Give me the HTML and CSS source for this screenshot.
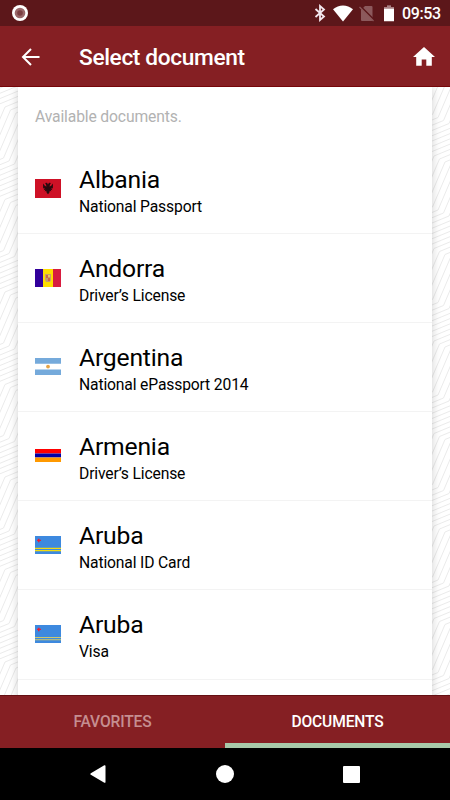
FILE: index.html
```html
<!DOCTYPE html>
<html lang="en">
<head>
<meta charset="utf-8">
<title>Select document</title>
<link rel="stylesheet" href="styles.css">
</head>
<body>
<div class="screen">
  <div class="status">
    <svg width="16" height="16" viewBox="0 0 16 16"><circle cx="8" cy="8" r="8" fill="#fff"/><circle cx="8" cy="8" r="5.3" fill="#9a686b"/><circle cx="8" cy="8" r="2.8" fill="#7b3f43"/></svg>
    <div class="status-icons">
      <svg class="bt" width="12" height="18" viewBox="0 0 12 18" fill="none" stroke="#f3e8ef" stroke-width="1.8"><path d="M1.5 5 10 12.5 6 16V2l4 3.500L1.500 13"/></svg>
      <svg class="wifi" width="20" height="17" viewBox="0 0 20 17"><path d="M0 4.300C5.800-.8 14.200-.8 20 4.300L10 16.500Z" fill="#fff"/></svg>
      <svg class="sim" width="16" height="17" viewBox="0 0 16 17"><path d="M6 1h6.500q1 0 1 1v13q0 1-1 1H3q-1 0-1-1V5Z" fill="#8c595c"/><path d="M1.500 1.500 15 15" stroke="#5c171a" stroke-width="2"/><path d="M.5 2 14.500 16" stroke="#8c595c" stroke-width="1.300"/></svg>
      <svg class="battery" width="10" height="17" viewBox="0 0 10 17"><path d="M0 2h3V.8h4V2h3v14.300H0Z" fill="#fff"/><path d="M0 2h3V.8h4V2h3v1.800H0Z" fill="#a98184"/></svg>
      <span class="clock">09:53</span>
    </div>
  </div>
  <header class="appbar">
    <svg class="back" width="20" height="18" viewBox="0 0 20 18" fill="none" stroke="#fff" stroke-width="2"><path d="M18.500 9H2M10 1 2 9l8 8"/></svg>
    <h1>Select document</h1>
    <svg class="home" width="22" height="19" viewBox="0 0 22 19"><path d="M11 0 0 10h3.200v8.700h5.500v-6.200h4.600v6.200h5.500V10H22Z" fill="#fff"/></svg>
  </header>
  <main class="content">
    <svg class="pattern" id="pattern" width="450" height="608" fill="none" stroke="#ebebeb" stroke-width="1"></svg>
    <section class="card">
      <p class="hint">Available documents.</p>
      <ul class="list">
        <li><svg class="flag" viewBox="0 0 26 19"><path fill="#ce1126" d="M0 0h26v19H0z"/><path fill="#28090e" d="m13 5.500-1-1.800-2 .3.800 1 .7 2.500L10 7 8 4.500l.2 5 1.500-.7-1 2.400 1.700-.8-.7 2 1.500-.7.5 2 1.300 1.600 1.300-1.600.5-2 1.500.7-.7-2 1.700.8-1-2.400 1.500.7.2-5L16 7l-1.500.5.700-2.500.8-1-2-.3Z"/></svg><div><h2>Albania</h2><p>National Passport</p></div></li>
        <li><svg class="flag" viewBox="0 0 26 18"><path fill="#31009b" d="M0 0h8v18H0z"/><path fill="#fede00" d="M8 0h10v18H8z"/><path fill="#d81c3f" d="M18 0h8v18h-8z"/><path fill="#c9a06a" d="M10 5h6v6l-1 2h-4l-1-2z"/><path fill="#d2683f" d="M11 6h2v3h-2zm2 3h2v3h-2z"/><path fill="#e8c95d" d="M13 6h2v2h-2z"/></svg><div><h2>Andorra</h2><p>Driver’s License</p></div></li>
        <li><svg class="flag" viewBox="0 0 26 17"><path fill="#fff" d="M0 0h26v17H0z"/><path fill="#75aadb" d="M0 0h26v5.700H0zM0 11.500h26V17H0z"/><circle cx="13" cy="8.600" r="1.900" fill="#e5a346"/></svg><div><h2>Argentina</h2><p>National ePassport 2014</p></div></li>
        <li><svg class="flag" viewBox="0 0 26 13"><path fill="#f00" d="M0 0h26v4.500H0z"/><path fill="#0000a8" d="M0 4.500h26v4H0z"/><path fill="#ff9900" d="M0 8.500h26V13H0z"/></svg><div><h2>Armenia</h2><p>Driver’s License</p></div></li>
        <li><svg class="flag" viewBox="0 0 26 18"><path fill="#3d89df" d="M0 0h26v18H0z"/><path fill="#f3dc12" d="M0 11.800h26v1.200H0zM0 14h26v1.200H0z"/><path fill="#e8203a" d="M3 2.800h1.500v1H6v1.200H4.500v1.200H3V5H2V3.800h1z"/></svg><div><h2>Aruba</h2><p>National ID Card</p></div></li>
        <li><svg class="flag" viewBox="0 0 26 18"><path fill="#3d89df" d="M0 0h26v18H0z"/><path fill="#cfca6c" d="M0 12h26v1H0zM0 14.200h26v1H0z"/><path fill="#e8203a" d="M3 2.800h1.500v1H6v1.200H4.500v1.200H3V5H2V3.800h1z"/></svg><div><h2>Aruba</h2><p>Visa</p></div></li>
      </ul>
    </section>
  </main>
  <nav class="tabs"><div class="tab">FAVORITES</div><div class="tab active">DOCUMENTS</div></nav>
  <div class="navbar">
    <svg width="16" height="18" viewBox="0 0 16 18"><path d="M.8 8.200 14.300.3q1.200-.3 1.200.8v15.800q0 1.100-1.200.8L.8 9.800q-1-.8 0-1.600Z" fill="#fff"/></svg>
    <svg width="18" height="18" viewBox="0 0 18 18"><circle cx="9" cy="9" r="9" fill="#fff"/></svg>
    <svg width="17" height="17" viewBox="0 0 17 17"><rect width="17" height="17" rx="1" fill="#fff"/></svg>
  </div>
</div>
<script src="pattern.js"></script>
</body>
</html>
```
FILE: styles.css
```css
* { box-sizing: border-box; margin: 0; padding: 0; }
body { font-family: Roboto, "Liberation Sans", sans-serif; background: #fff; }
svg { display: block; flex: none; }
.screen { width: 450px; height: 800px; display: flex; flex-direction: column; overflow: hidden; }
.status { height: 26px; flex: none; background: #5c171a; display: flex; align-items: center; justify-content: space-between; padding: 0 9px 0 12px; }
.status-icons { display: flex; align-items: center; }
.bt { margin-right: 7px; }
.wifi { margin-right: 6px; }
.sim { margin-right: 9px; }
.battery { margin-right: 8px; }
.clock { color: #fff; font-size: 16px; line-height: 26px; width: 39px; font-weight: 500; letter-spacing: -.4px; white-space: nowrap; padding-top: 2px; }
.appbar { height: 61px; flex: none; background: #851f23; border-bottom: 1px solid #760609; display: flex; align-items: center; padding: 1px 15px 0 21px; }
.appbar h1 { color: #fff; font-size: 22.700px; font-weight: 500; letter-spacing: -.36px; line-height: 30px; margin-left: 38px; flex: 1; padding-top: 2px; }
.content { height: 608px; flex: none; position: relative; overflow: hidden; padding: 0 18px; }
.pattern { position: absolute; left: 0; top: 0; }
.card { position: relative; height: 620px; background: #fff; box-shadow: 0 0 9px rgba(0,0,0,.19); }
.hint { height: 58px; padding: 20px 0 0 17px; font-size: 15.700px; letter-spacing: -.15px; line-height: 20px; color: #b2b2b2; }
.list { list-style: none; }
.list li { height: 89.100px; border-bottom: 1px solid #f3f3f3; display: flex; align-items: center; padding-left: 17px; }
.flag { width: 26px; margin-right: 18px; position: relative; top: -.5px; }
.list h2 { font-size: 24.700px; font-weight: 400; letter-spacing: -.2px; line-height: 30px; color: #000; padding-top: 2px; }
.list p { font-size: 15.700px; letter-spacing: -.16px; line-height: 20px; color: #000; margin-top: 2px; margin-bottom: -1px; }
.tabs { height: 53px; flex: none; display: flex; background: #851f23; border-top: 1px solid #641013; }
.tab { flex: 1; text-align: center; font-size: 15.600px; font-weight: 500; letter-spacing: -.15px; line-height: 52px; color: #c58e91; }
.tab.active { color: #fff; border-bottom: 5px solid #a8c8a9; }
.navbar { flex: 1; background: #000; display: flex; justify-content: space-between; align-items: center; padding: 0 90px; }
```
FILE: pattern.js
```js
// Zigzag contour lines: steep runs alternating with shallow ones, repeated sideways.
const svg = document.getElementById("pattern");
for (let k = -10; k < 260; k++) {
  let x = 5 + 5.5 * k, y = 20 + 3 * k - 92.5 * 6;
  let d = `M${x} ${y}`;
  for (let i = 0; i < 28; i++) {
    x -= 18; y += 42;
    d += `L${x} ${y}`;
    x -= 42.5; y += 17.5;
    d += `L${x} ${y}`;
  }
  const path = document.createElementNS("http://www.w3.org/2000/svg", "path");
  path.setAttribute("d", d);
  svg.appendChild(path);
}
```
